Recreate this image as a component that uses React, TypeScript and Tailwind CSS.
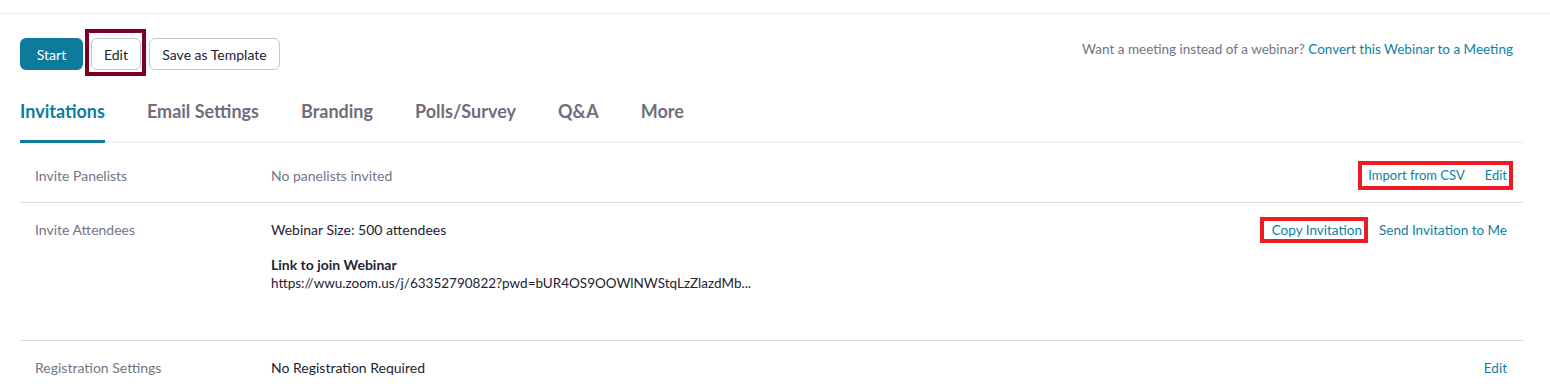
const tabs = ['Invitations', 'Email Settings', 'Branding', 'Polls/Survey', 'Q&A', 'More'];

export default function App() {
  return (
    <div className="w-[1550px] h-[390px] overflow-hidden bg-white font-['Lato',sans-serif] text-[14px] text-[#232333]">
      <div className="h-[14px] border-b border-[#ebebeb]" />

      <div className="flex items-start justify-between pl-[20px] pr-[37px] pt-[15px]">
        <div className="flex items-start">
          <button className="mt-[9px] h-[32px] w-[63px] rounded-[6px] bg-[#0f7b9c] text-[14px] text-white">Start</button>
          <div className="ml-[2px] border-[4px] border-[#7d0022] pb-[2px] pl-[2px] pr-[1px] pt-[5px]">
            <button className="h-[32px] w-[50px] rounded-[6px] border border-[#c5c5d0] bg-white text-[14px]">Edit</button>
          </div>
          <button className="ml-[3px] mt-[9px] h-[32px] w-[131px] rounded-[6px] border border-[#c5c5d0] bg-white text-[14px]">Save as Template</button>
        </div>
        <div className="mt-[10px] text-[13.5px] leading-[20px] text-[#747487]">
          Want a meeting instead of a webinar? <span className="text-[#0e7fa3]">Convert this Webinar to a Meeting</span>
        </div>
      </div>

      <div className="ml-[20px] mr-[27px] mt-[22px] flex gap-[42px] border-b-[2px] border-[#f2f2f4]">
        {tabs.map((t, i) => (
          <div
            key={t}
            className={
              i === 0
                ? '-mb-[2px] border-b-[3px] border-[#0f7b9c] pb-[15px] text-[18px] leading-[27px] font-bold text-[#0f7b9c]'
                : 'pb-[16px] text-[18px] leading-[27px] font-bold text-[#6e6e7e]'
            }
          >
            {t}
          </div>
        ))}
      </div>

      <div className="ml-[20px] mr-[27px]">
        <div className="flex h-[60px] items-start border-b border-[#dcdcdc] pl-[15px] pr-[16px] pt-[23px] leading-[20px]">
          <div className="w-[236px] text-[#747487]">Invite Panelists</div>
          <div className="flex-1 text-[#747487]">No panelists invited</div>
          <div className="-mr-[6px] -mt-[5px] flex items-center gap-[20px] border-[4px] border-[#ed1c24] pl-[6px] pr-[2px] text-[13px] leading-[21px] text-[#0e7fa3]">
            <span>Import from CSV</span>
            <span>Edit</span>
          </div>
        </div>

        <div className="flex h-[138px] items-start border-b border-[#dcdcdc] pl-[15px] pr-[16px] pt-[17px] leading-[20px]">
          <div className="w-[236px] text-[#747487]">Invite Attendees</div>
          <div className="flex-1">
            <div>Webinar Size: 500 attendees</div>
            <div className="mt-[15px] font-bold leading-[19px]">Link to join Webinar</div>
            <div className="text-[13.5px] leading-[19px]">https://wwu.zoom.us/j/63352790822?pwd=bUR4OS9OOWlNWStqLzZlazdMb...</div>
          </div>
          <div className="-mt-[3px] flex items-center gap-[11px] text-[13.5px] text-[#0e7fa3]">
            <span className="border-[4px] border-[#ed1c24] pl-[8px] pr-[2px] leading-[18px]">Copy Invitation</span>
            <span>Send Invitation to Me</span>
          </div>
        </div>

        <div className="flex h-[50px] items-start pl-[15px] pr-[16px] pt-[17px] leading-[20px]">
          <div className="w-[236px] text-[#747487]">Registration Settings</div>
          <div className="flex-1">No Registration Required</div>
          <div className="text-[13.5px] text-[#0e7fa3]">Edit</div>
        </div>
      </div>
    </div>
  );
}
